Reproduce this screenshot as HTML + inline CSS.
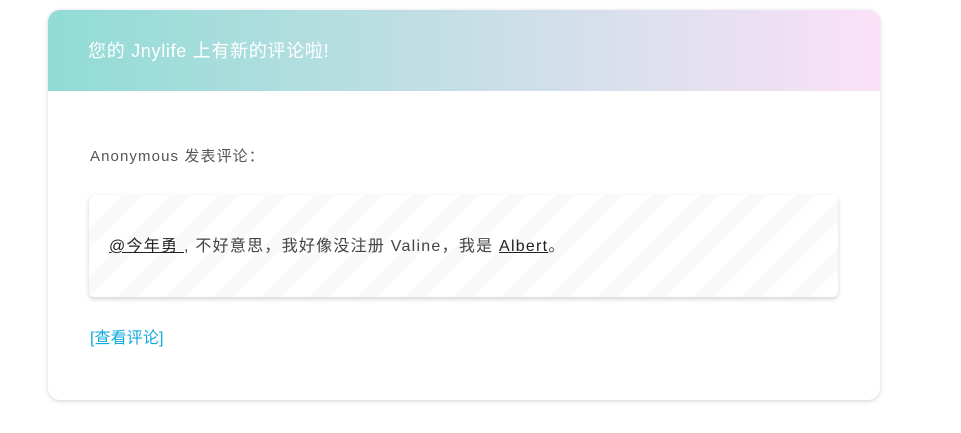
<!DOCTYPE html>
<html><head><meta charset="utf-8"><style>
body{margin:0;background:#fff;width:961px;height:433px;overflow:hidden;font-family:"Liberation Sans","Noto Sans CJK SC",sans-serif;}
.card{position:absolute;left:48px;top:10px;width:832px;height:390px;border-radius:12px;box-shadow:0 1px 5px rgba(0,0,0,.18);background:#fff;overflow:hidden;}
.hd{height:81px;background:linear-gradient(90deg,#91dcd5,#fbe1f7);color:#fff;font-size:18px;line-height:82px;padding-left:40px;letter-spacing:0.7px;}
.p1{position:absolute;left:42px;top:135px;font-size:15px;color:#555;letter-spacing:1.1px;}
.box{position:absolute;left:41px;top:185px;width:749px;height:102px;border-radius:5px;box-shadow:0 2px 5px rgba(0,0,0,.18);
background:repeating-linear-gradient(-45deg,#fff 0 20px,#f9f9f9 20px 34px);}
.box p{margin:0;position:absolute;left:20px;top:37px;font-size:16px;color:#444;letter-spacing:1.25px;}
.box a{color:#222;text-decoration:underline;}
.lk{position:absolute;left:42px;top:314px;font-size:16px;color:#12aadb;letter-spacing:0.1px;}
</style></head><body>
<div class="card">
<div class="hd">您的 Jnylife 上有新的评论啦!</div>
<div class="p1">Anonymous 发表评论：</div>
<div class="box"><p><a>@今年勇 </a>, 不好意思，我好像没注册 Valine，我是 <a>Albert</a>。</p></div>
<div class="lk">[查看评论]</div>
</div>
</body></html>
